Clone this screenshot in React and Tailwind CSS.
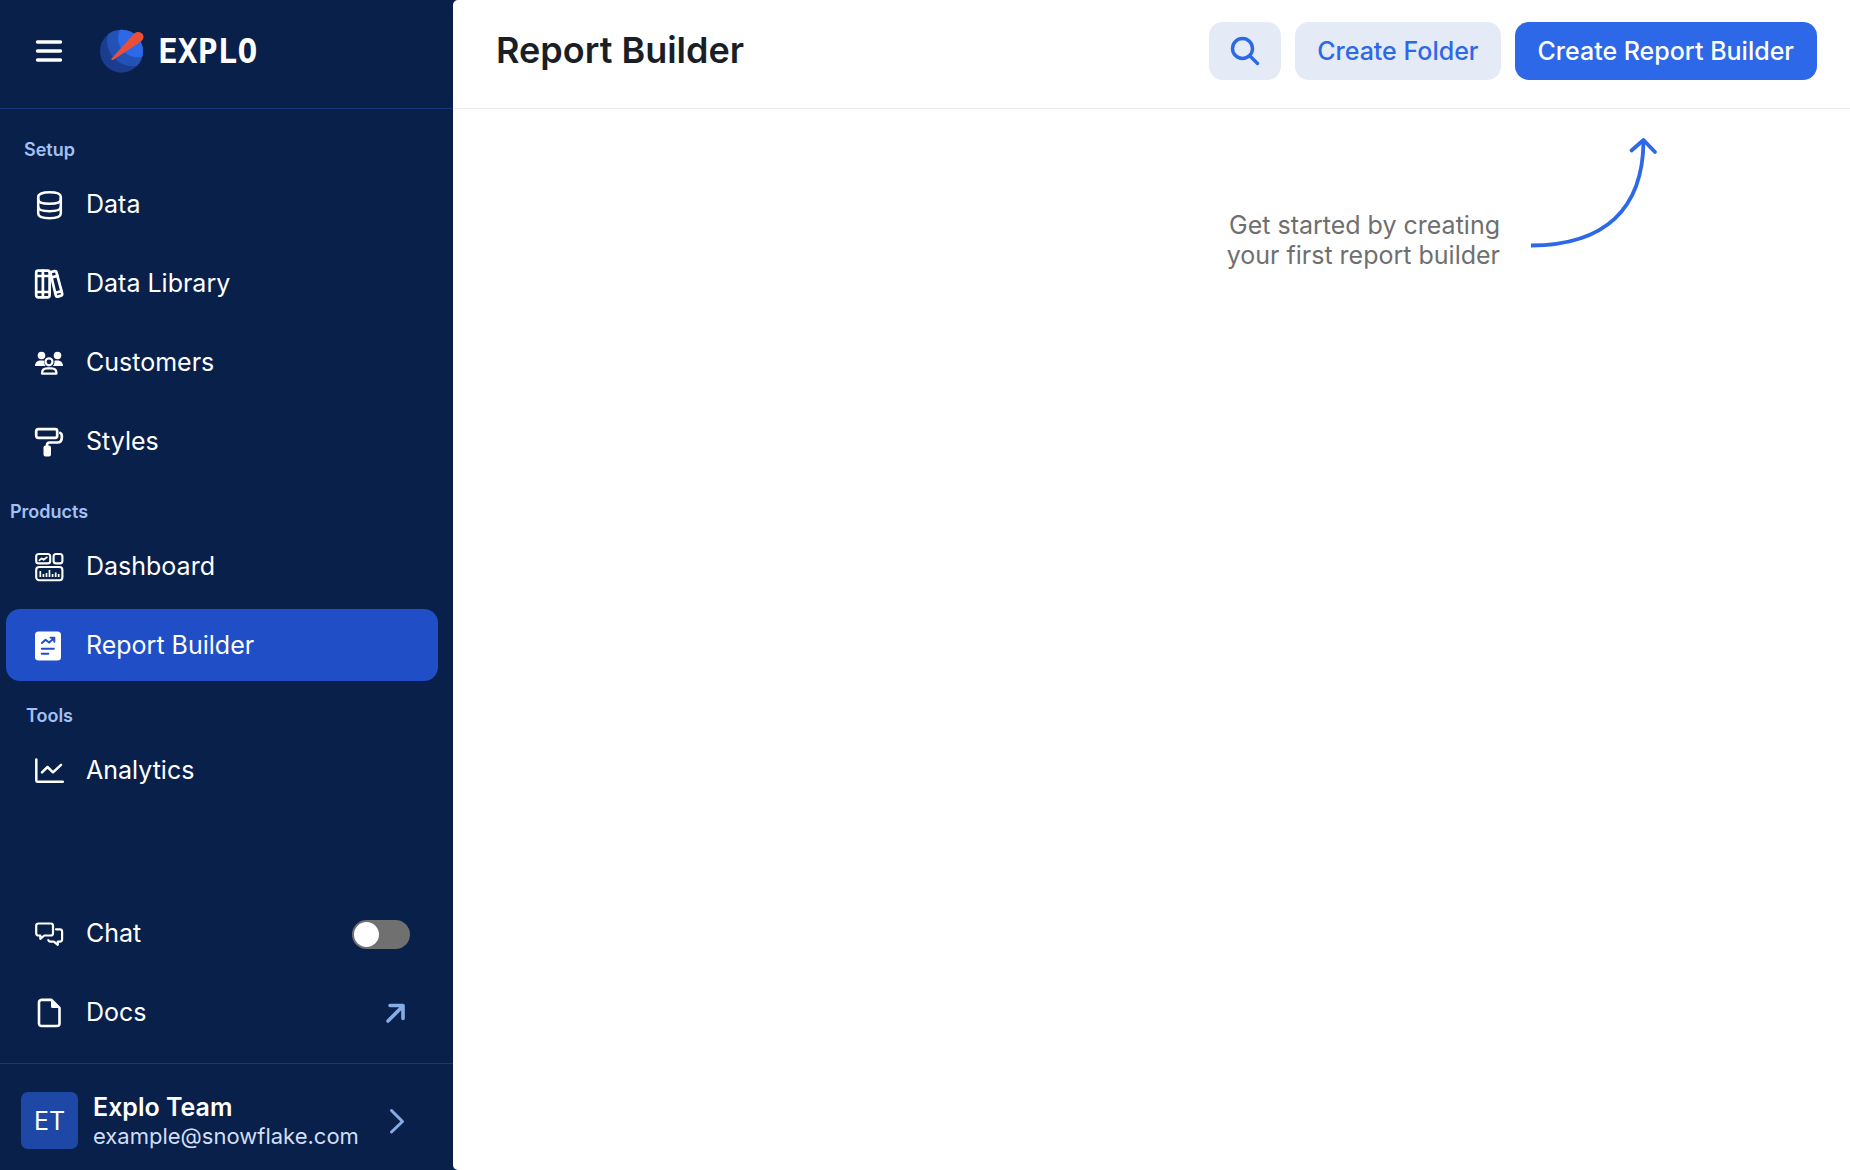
const line = {
  fill: "none",
  stroke: "currentColor",
  strokeWidth: 2.6,
  strokeLinecap: "round",
  strokeLinejoin: "round",
};

function Icon({ children, className = "" }) {
  return (
    <svg viewBox="0 0 30 30" className={`size-[30px] shrink-0 ${className}`} aria-hidden="true">
      {children}
    </svg>
  );
}

function DataIcon() {
  return (
    <Icon>
      <g {...line} strokeWidth="2.500">
        <path d="M4.200 7c0-3 4.500-4.700 11.300-4.700S26.800 4 26.800 7v2.500c0 2.800-4.500 4.300-11.300 4.300S4.200 12.300 4.200 9.500z" />
        <path d="M4.200 8v15.500c0 3 4.500 4.700 11.300 4.700s11.300-1.700 11.300-4.700V8" />
        <path d="M4.200 17c0 2.800 4.500 4.200 11.300 4.200s11.300-1.400 11.300-4.200" />
      </g>
    </Icon>
  );
}

function LibraryIcon() {
  return (
    <Icon>
      <g {...line} strokeWidth="2.700">
        <rect x="2.200" y="1.700" width="13.400" height="26.600" rx="2" />
        <path d="M8.900 1.700v26.600M2.200 7h13.400M2.200 23h13.400" />
        <path d="M16.300 3.300l4.200-1.200a1.500 1.500 0 0 1 1.900 1.100l5.800 21.500a1.500 1.500 0 0 1-1.100 1.900l-3.400 1a1.500 1.500 0 0 1-1.900-1.100z" />
        <path d="M17.400 8.500l6-1.600M21.600 23.700l6-1.600" />
      </g>
    </Icon>
  );
}

function CustomersIcon() {
  return (
    <Icon>
      <g fill="currentColor">
        <circle cx="7.500" cy="7.500" r="3.800" />
        <circle cx="23.500" cy="7.500" r="3.800" />
        <path d="M1 18c0-3.300 2.300-5.400 5.300-5.400h2.400c.6 0 1 .1 1.500.300-.2 2 .3 3.700 1.500 5.100zM29 18c0-3.300-2.300-5.400-5.300-5.400h-2c-.4 0-.8.1-1.200.2.2 2.100-.3 3.800-1.500 5.200z" />
      </g>
      <g {...line} strokeWidth="2.200">
        <circle cx="15" cy="13.800" r="3.500" />
        <path d="M8 25.600c0-3.200 2-5.200 5-5.200h4.500c3 0 5 2 5 5.200z" />
      </g>
    </Icon>
  );
}

function StylesIcon() {
  return (
    <Icon>
      <g {...line} strokeWidth="2.700">
        <rect x="2.200" y="2.200" width="21" height="8.600" rx="2" />
        <path d="M26.300 6c1 .4 1.500 1.200 1.500 2.400v2.400c0 3-1.600 4.700-4.400 4.700h-7.600c-2 0-2.800.9-2.800 2.500v2" />
      </g>
      <rect x="9.500" y="18.500" width="7.500" height="11" rx="2" fill="currentColor" />
    </Icon>
  );
}

function DashboardIcon() {
  return (
    <Icon>
      <g {...line} strokeWidth="2.100">
        <rect x="2.200" y="2" width="14" height="9.400" rx="2.500" />
        <rect x="19.600" y="2" width="8.800" height="9.400" rx="2.500" />
        <rect x="2.200" y="15" width="26.200" height="13.200" rx="3" />
        <path strokeWidth="1.700" d="M5.300 8.300l2.300-2 2 1.500 3.300-2.500" />
        <path strokeWidth="1.700" strokeLinecap="butt" d="M6.300 19v6M9.400 22v3M12.500 21v4M15.500 18v7M18.600 22v3M21.700 20.500v4.500M24.700 22v3" />
      </g>
    </Icon>
  );
}

function ReportIcon() {
  return (
    <Icon>
      <rect x="1" y="0.500" width="26" height="29" rx="3.500" fill="currentColor" />
      <g {...line} strokeWidth="2" className="text-[#204ec6]">
        <path d="M8 12l3.500-3.200 3.500 2.700 4.800-4M16.600 6.800h3.700v3.900M7.800 17.700h12M7.800 22.700h6.500" />
      </g>
    </Icon>
  );
}

function AnalyticsIcon() {
  return (
    <Icon>
      <g {...line} strokeWidth="2.500">
        <path d="M2.300 3.500v20.700c0 1 .6 1.500 1.500 1.500h25" />
        <path d="M8 16.300l5.500-5.300 5.500 5.300 8-7.500" />
      </g>
    </Icon>
  );
}

function ChatIcon() {
  return (
    <Icon>
      <g {...line} strokeWidth="2.200">
        <path d="M4.500 4.500h12.200c1.500 0 2.300.8 2.300 2.300v7.400c0 1.500-.8 2.300-2.300 2.300h-6.400l-4 3.300v-3.300H4.500c-1.500 0-2.300-.8-2.300-2.300V6.800c0-1.500.8-2.300 2.300-2.300z" />
        <path d="M22 10.300h3.800c1.500 0 2.300.8 2.300 2.300v7.700c0 1.500-.8 2.300-2.300 2.300h-2v3.200l-4-3.200h-3.300c-1.100 0-1.900-.5-2.200-1.500" />
      </g>
    </Icon>
  );
}

function DocsIcon() {
  return (
    <Icon>
      <path {...line} strokeWidth="2.600" d="M7 1.900h10.500l8 8V25.500a2.500 2.500 0 0 1-2.500 2.500H7.500A2.500 2.500 0 0 1 5 25.500V4.400A2.500 2.500 0 0 1 7 1.900z" />
      <path fill="currentColor" d="M17 2v6.500a1.500 1.500 0 0 0 1.500 1.500H26z" />
    </Icon>
  );
}

function Logo() {
  return (
    <a href="#home" className="flex items-center gap-3" aria-label="Explo">
      <svg viewBox="0 0 140 140" className="size-[47px] shrink-0" aria-hidden="true">
        <clipPath id="globe">
          <circle cx="67" cy="69" r="64" />
        </clipPath>
        <g clipPath="url(#globe)">
          <rect width="140" height="140" fill="#1c3d8f" />
          <path fill="#2352b6" d="M34 0C14 38 26 74 52 96c20 17 42 21 70 16l18-8V0z" />
          <path fill="#2c68e8" d="M64 0C52 28 56 50 72 68c16 18 38 24 68 16V0z" />
        </g>
        <path fill="#ea5037" d="M38 90L104 18c8-9 20-7 26 0 5 8 3 17-6 23L42 95c-4 2-7-2-4-5z" />
      </svg>
      <span className="font-['DejaVu_Sans_Mono',monospace] text-[33px] leading-none font-bold">
        EXPLO
      </span>
    </a>
  );
}

const row = "flex h-[72px] items-center gap-[22px] rounded-[14px] px-7 pt-0.5 text-[25px]";
const heading = "h-6 text-lg leading-[26px] font-semibold text-[#a4c0f3]";

function NavItem({ icon, label, active = false, trailing = null }) {
  return (
    <a
      href={`#${label.toLowerCase().replace(" ", "-")}`}
      aria-current={active ? "page" : undefined}
      className={`${row} ${active ? "bg-[#204ec6]" : ""}`}
    >
      {icon}
      <span className="flex-1">{label}</span>
      {trailing}
    </a>
  );
}

function Sidebar() {
  return (
    <aside className="flex w-[453px] shrink-0 flex-col text-white">
      <div className="flex h-[109px] items-start gap-[23px] border-b border-[#18377f] pt-7 pl-[34px]">
        <button type="button" aria-label="Toggle menu" className="flex h-[46px] w-[42px] items-center">
          <Icon>
            <path {...line} strokeWidth="3.400" d="M3.500 6h23M3.500 15h23M3.500 24h23" />
          </Icon>
        </button>
        <Logo />
      </div>

      <nav className="flex flex-1 flex-col gap-[7px] pt-7 pr-[15px] pb-[15px] pl-[6px]">
        <h2 className={`${heading} pl-[18px]`}>Setup</h2>
        <NavItem icon={<DataIcon />} label="Data" />
        <NavItem icon={<LibraryIcon />} label="Data Library" />
        <NavItem icon={<CustomersIcon />} label="Customers" />
        <NavItem icon={<StylesIcon />} label="Styles" />
        <h2 className={`${heading} mt-[15px] pl-1`}>Products</h2>
        <NavItem icon={<DashboardIcon />} label="Dashboard" />
        <NavItem icon={<ReportIcon />} label="Report Builder" active />
        <h2 className={`${heading} mt-[15px] pl-5`}>Tools</h2>
        <NavItem icon={<AnalyticsIcon />} label="Analytics" />

        <label className={`${row} mt-auto cursor-pointer`}>
          <ChatIcon />
          <span className="flex-1">Chat</span>
          <input
            type="checkbox"
            role="switch"
            className="h-[29px] w-[58px] appearance-none rounded-full bg-[#707070] p-[2px] before:block before:size-[25px] before:rounded-full before:bg-white checked:bg-[#2c68e7] checked:before:ml-auto"
          />
        </label>
        <NavItem
          icon={<DocsIcon />}
          label="Docs"
          trailing={
            <svg viewBox="0 0 28 28" className="size-7 shrink-0 text-[#86abe6]" aria-hidden="true">
              <path {...line} strokeWidth="3.600" d="M6 22L20.500 7.500M8 6.500h13v13" />
            </svg>
          }
        />
      </nav>

      <button
        type="button"
        className="flex h-[107px] items-center border-t border-[#18377f] pt-[7px] pr-[47px] pl-[21px] text-left"
      >
        <span className="flex size-[57px] shrink-0 items-center justify-center rounded-[7px] bg-[#1d48a6] pt-0.5 text-[25px]">
          ET
        </span>
        <span className="ml-[15px] flex flex-1 flex-col">
          <span className="text-[25px] leading-[30px] font-semibold">Explo Team</span>
          <span className="text-[22px] leading-[28px] text-[#d0def6]">example@snowflake.com</span>
        </span>
        <svg viewBox="0 0 18 28" className="h-7 w-[18px] shrink-0 text-[#86abe6]" aria-hidden="true">
          <path {...line} strokeWidth="3" d="M3.500 3.500L14.500 14.500L3.500 25" />
        </svg>
      </button>
    </aside>
  );
}

export default function App() {
  return (
    <div className="flex min-h-screen bg-[#09204a] font-['Inter',sans-serif]">
      <Sidebar />
      <main className="flex-1 rounded-l-[5px] bg-white">
        <header className="flex h-[109px] items-start justify-between border-b border-[#ebebeb] pt-[22px] pr-[33px] pl-[43px]">
          <h1 className="text-4xl leading-[56px] font-semibold text-[#1a1f26]">Report Builder</h1>
          <div className="flex gap-[14px] text-[25px] font-medium">
            <button
              type="button"
              aria-label="Search"
              className="flex h-[58px] w-[72px] items-center justify-center rounded-[14px] bg-[#e4eaf6] text-[#2c68e7]"
            >
              <Icon>
                <g {...line} strokeWidth="3.400">
                  <circle cx="12.500" cy="12.500" r="10" />
                  <path d="M20 20l7.500 7.500" />
                </g>
              </Icon>
            </button>
            <button type="button" className="h-[58px] rounded-[14px] bg-[#e4eaf6] px-[22px] pt-0.5 text-[#2c68e7]">
              Create Folder
            </button>
            <button type="button" className="h-[58px] rounded-[14px] bg-[#2c68e7] px-[23px] pt-0.5 text-white">
              Create Report Builder
            </button>
          </div>
        </header>

        <section className="flex items-start justify-end pt-[28px] pr-[191px]">
          <p className="mt-[73px] text-right text-[25px] leading-[30px] text-[#6f6f6f]">
            Get started by creating
            <br />
            your first report builder
          </p>
          <svg viewBox="0 0 130 132" className="ml-[29px] h-[132px] w-[130px] shrink-0" aria-hidden="true">
            <g fill="none" stroke="#2c68e7" strokeWidth="3.800" strokeLinejoin="round">
              <path d="M2 108.500C76 108 114 72 114.500 4" />
              <path strokeLinecap="round" d="M102.500 13.500L114.500 3L126 15" />
            </g>
          </svg>
        </section>
      </main>
    </div>
  );
}
